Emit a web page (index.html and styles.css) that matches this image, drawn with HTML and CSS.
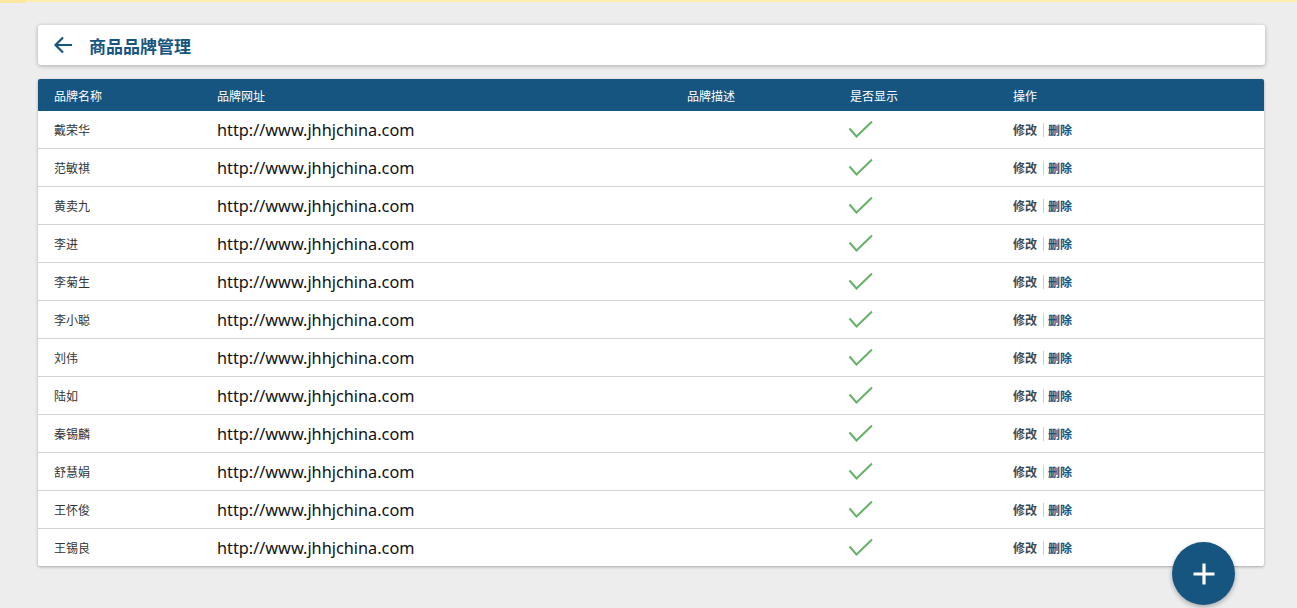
FILE: index.html
```html
<!DOCTYPE html>
<html lang="zh-CN">
<head>
<meta charset="utf-8">
<title>商品品牌管理</title>
<link rel="stylesheet" href="styles.css">
</head>
<body>
<div class="topbar"><span class="topbar-tab"></span></div>
<main class="page">
  <header class="title-card">
    <svg class="back" width="20" height="18" viewBox="0 0 20 18"><path d="M19 9H2.5M10 1.5L2.5 9L10 16.5" fill="none" stroke="#16557f" stroke-width="2.2"/></svg>
    <h1 class="title">商品品牌管理</h1>
  </header>
  <section class="table-card">
    <div class="row head">
      <div class="cell">品牌名称</div>
      <div class="cell">品牌网址</div>
      <div class="cell">品牌描述</div>
      <div class="cell">是否显示</div>
      <div class="cell">操作</div>
    </div>
    <div class="row"><div class="cell name">戴荣华</div><div class="cell url">http://www.jhhjchina.com</div><div class="cell"></div><div class="cell"><svg class="check" width="26" height="20" viewBox="0 0 26 20"><polyline points="1.5,8.5 8.5,16.5 24,1.5" fill="none" stroke="#66b16a" stroke-width="2"/></svg></div><div class="cell ops"><span class="edit">修改</span><span class="sep"></span><span class="del">删除</span></div></div>
    <div class="row"><div class="cell name">范敏祺</div><div class="cell url">http://www.jhhjchina.com</div><div class="cell"></div><div class="cell"><svg class="check" width="26" height="20" viewBox="0 0 26 20"><polyline points="1.5,8.5 8.5,16.5 24,1.5" fill="none" stroke="#66b16a" stroke-width="2"/></svg></div><div class="cell ops"><span class="edit">修改</span><span class="sep"></span><span class="del">删除</span></div></div>
    <div class="row"><div class="cell name">黄卖九</div><div class="cell url">http://www.jhhjchina.com</div><div class="cell"></div><div class="cell"><svg class="check" width="26" height="20" viewBox="0 0 26 20"><polyline points="1.5,8.5 8.5,16.5 24,1.5" fill="none" stroke="#66b16a" stroke-width="2"/></svg></div><div class="cell ops"><span class="edit">修改</span><span class="sep"></span><span class="del">删除</span></div></div>
    <div class="row"><div class="cell name">李进</div><div class="cell url">http://www.jhhjchina.com</div><div class="cell"></div><div class="cell"><svg class="check" width="26" height="20" viewBox="0 0 26 20"><polyline points="1.5,8.5 8.5,16.5 24,1.5" fill="none" stroke="#66b16a" stroke-width="2"/></svg></div><div class="cell ops"><span class="edit">修改</span><span class="sep"></span><span class="del">删除</span></div></div>
    <div class="row"><div class="cell name">李菊生</div><div class="cell url">http://www.jhhjchina.com</div><div class="cell"></div><div class="cell"><svg class="check" width="26" height="20" viewBox="0 0 26 20"><polyline points="1.5,8.5 8.5,16.5 24,1.5" fill="none" stroke="#66b16a" stroke-width="2"/></svg></div><div class="cell ops"><span class="edit">修改</span><span class="sep"></span><span class="del">删除</span></div></div>
    <div class="row"><div class="cell name">李小聪</div><div class="cell url">http://www.jhhjchina.com</div><div class="cell"></div><div class="cell"><svg class="check" width="26" height="20" viewBox="0 0 26 20"><polyline points="1.5,8.5 8.5,16.5 24,1.5" fill="none" stroke="#66b16a" stroke-width="2"/></svg></div><div class="cell ops"><span class="edit">修改</span><span class="sep"></span><span class="del">删除</span></div></div>
    <div class="row"><div class="cell name">刘伟</div><div class="cell url">http://www.jhhjchina.com</div><div class="cell"></div><div class="cell"><svg class="check" width="26" height="20" viewBox="0 0 26 20"><polyline points="1.5,8.5 8.5,16.5 24,1.5" fill="none" stroke="#66b16a" stroke-width="2"/></svg></div><div class="cell ops"><span class="edit">修改</span><span class="sep"></span><span class="del">删除</span></div></div>
    <div class="row"><div class="cell name">陆如</div><div class="cell url">http://www.jhhjchina.com</div><div class="cell"></div><div class="cell"><svg class="check" width="26" height="20" viewBox="0 0 26 20"><polyline points="1.5,8.5 8.5,16.5 24,1.5" fill="none" stroke="#66b16a" stroke-width="2"/></svg></div><div class="cell ops"><span class="edit">修改</span><span class="sep"></span><span class="del">删除</span></div></div>
    <div class="row"><div class="cell name">秦锡麟</div><div class="cell url">http://www.jhhjchina.com</div><div class="cell"></div><div class="cell"><svg class="check" width="26" height="20" viewBox="0 0 26 20"><polyline points="1.5,8.5 8.5,16.5 24,1.5" fill="none" stroke="#66b16a" stroke-width="2"/></svg></div><div class="cell ops"><span class="edit">修改</span><span class="sep"></span><span class="del">删除</span></div></div>
    <div class="row"><div class="cell name">舒慧娟</div><div class="cell url">http://www.jhhjchina.com</div><div class="cell"></div><div class="cell"><svg class="check" width="26" height="20" viewBox="0 0 26 20"><polyline points="1.5,8.5 8.5,16.5 24,1.5" fill="none" stroke="#66b16a" stroke-width="2"/></svg></div><div class="cell ops"><span class="edit">修改</span><span class="sep"></span><span class="del">删除</span></div></div>
    <div class="row"><div class="cell name">王怀俊</div><div class="cell url">http://www.jhhjchina.com</div><div class="cell"></div><div class="cell"><svg class="check" width="26" height="20" viewBox="0 0 26 20"><polyline points="1.5,8.5 8.5,16.5 24,1.5" fill="none" stroke="#66b16a" stroke-width="2"/></svg></div><div class="cell ops"><span class="edit">修改</span><span class="sep"></span><span class="del">删除</span></div></div>
    <div class="row last"><div class="cell name">王锡良</div><div class="cell url">http://www.jhhjchina.com</div><div class="cell"></div><div class="cell"><svg class="check" width="26" height="20" viewBox="0 0 26 20"><polyline points="1.5,8.5 8.5,16.5 24,1.5" fill="none" stroke="#66b16a" stroke-width="2"/></svg></div><div class="cell ops"><span class="edit">修改</span><span class="sep"></span><span class="del">删除</span></div></div>
  </section>
</main>
<button class="fab" aria-label="添加"><svg width="24" height="24" viewBox="0 0 24 24"><path d="M12 1.5V22.5M1.5 12H22.5" stroke="#fff" stroke-width="3.2"/></svg></button>
</body>
</html>
```

FILE: styles.css
```css
html, body {
  margin: 0;
  padding: 0;
}
body {
  background: #ededed;
  font-family: "Noto Sans CJK SC", "Noto Sans", sans-serif;
  width: 1297px;
  height: 608px;
  overflow: hidden;
}
.topbar {
  height: 2px;
  background: #fdeeb0;
  display: flex;
}
.topbar-tab {
  width: 26px;
  height: 3px;
  background: #fde7a0;
}
.page {
  padding: 23px 32px 0 38px;
}
.title-card {
  background: #fff;
  height: 40px;
  border-radius: 3px;
  box-shadow: 0 1px 4px rgba(0,0,0,0.28);
  display: flex;
  align-items: center;
  padding-left: 15px;
  box-sizing: border-box;
}
.back {
  display: block;
}
.title {
  margin: 0 0 0 16px;
  font-size: 17px;
  font-weight: 700;
  color: #16557f;
  line-height: 1;
}
.table-card {
  margin-top: 14px;
  width: 1226px;
  background: #fff;
  border-radius: 2px;
  box-shadow: 0 1px 3px rgba(0,0,0,0.3);
  overflow: hidden;
}
.row {
  display: grid;
  grid-template-columns: 163px 470px 163px 163px 1fr;
  height: 38px;
  align-items: center;
  border-bottom: 1px solid #d3d3d3;
  box-sizing: border-box;
}
.row.last {
  border-bottom: none;
  height: 37px;
}
.row.head {
  background: #16557f;
  height: 32px;
  border-bottom: none;
  color: #fff;
  font-size: 12px;
}
.cell {
  padding-left: 16px;
  font-size: 12px;
  color: #333;
  white-space: nowrap;
}
.head .cell {
  color: #fff;
}
.url {
  font-family: "Noto Sans", "Open Sans", sans-serif;
  font-size: 16.3px;
  color: #111;
  padding-left: 16px;
}
.check {
  display: block;
  margin-left: -2px;
}
.ops {
  font-weight: 700;
  font-size: 12px;
  display: flex;
  align-items: center;
}
.edit {
  color: #3a4a56;
}
.sep {
  display: inline-block;
  width: 1px;
  height: 14px;
  background: #f0c59c;
  margin: 0 4px 0 6px;
}
.del {
  color: #16557f;
}
.fab {
  position: fixed;
  left: 1172px;
  top: 542px;
  width: 63px;
  height: 63px;
  border-radius: 50%;
  border: none;
  background: #16557f;
  box-shadow: 0 2px 5px rgba(0,0,0,0.3);
  display: flex;
  align-items: center;
  justify-content: center;
  padding: 0;
}
.fab svg {
  display: block;
}
```
